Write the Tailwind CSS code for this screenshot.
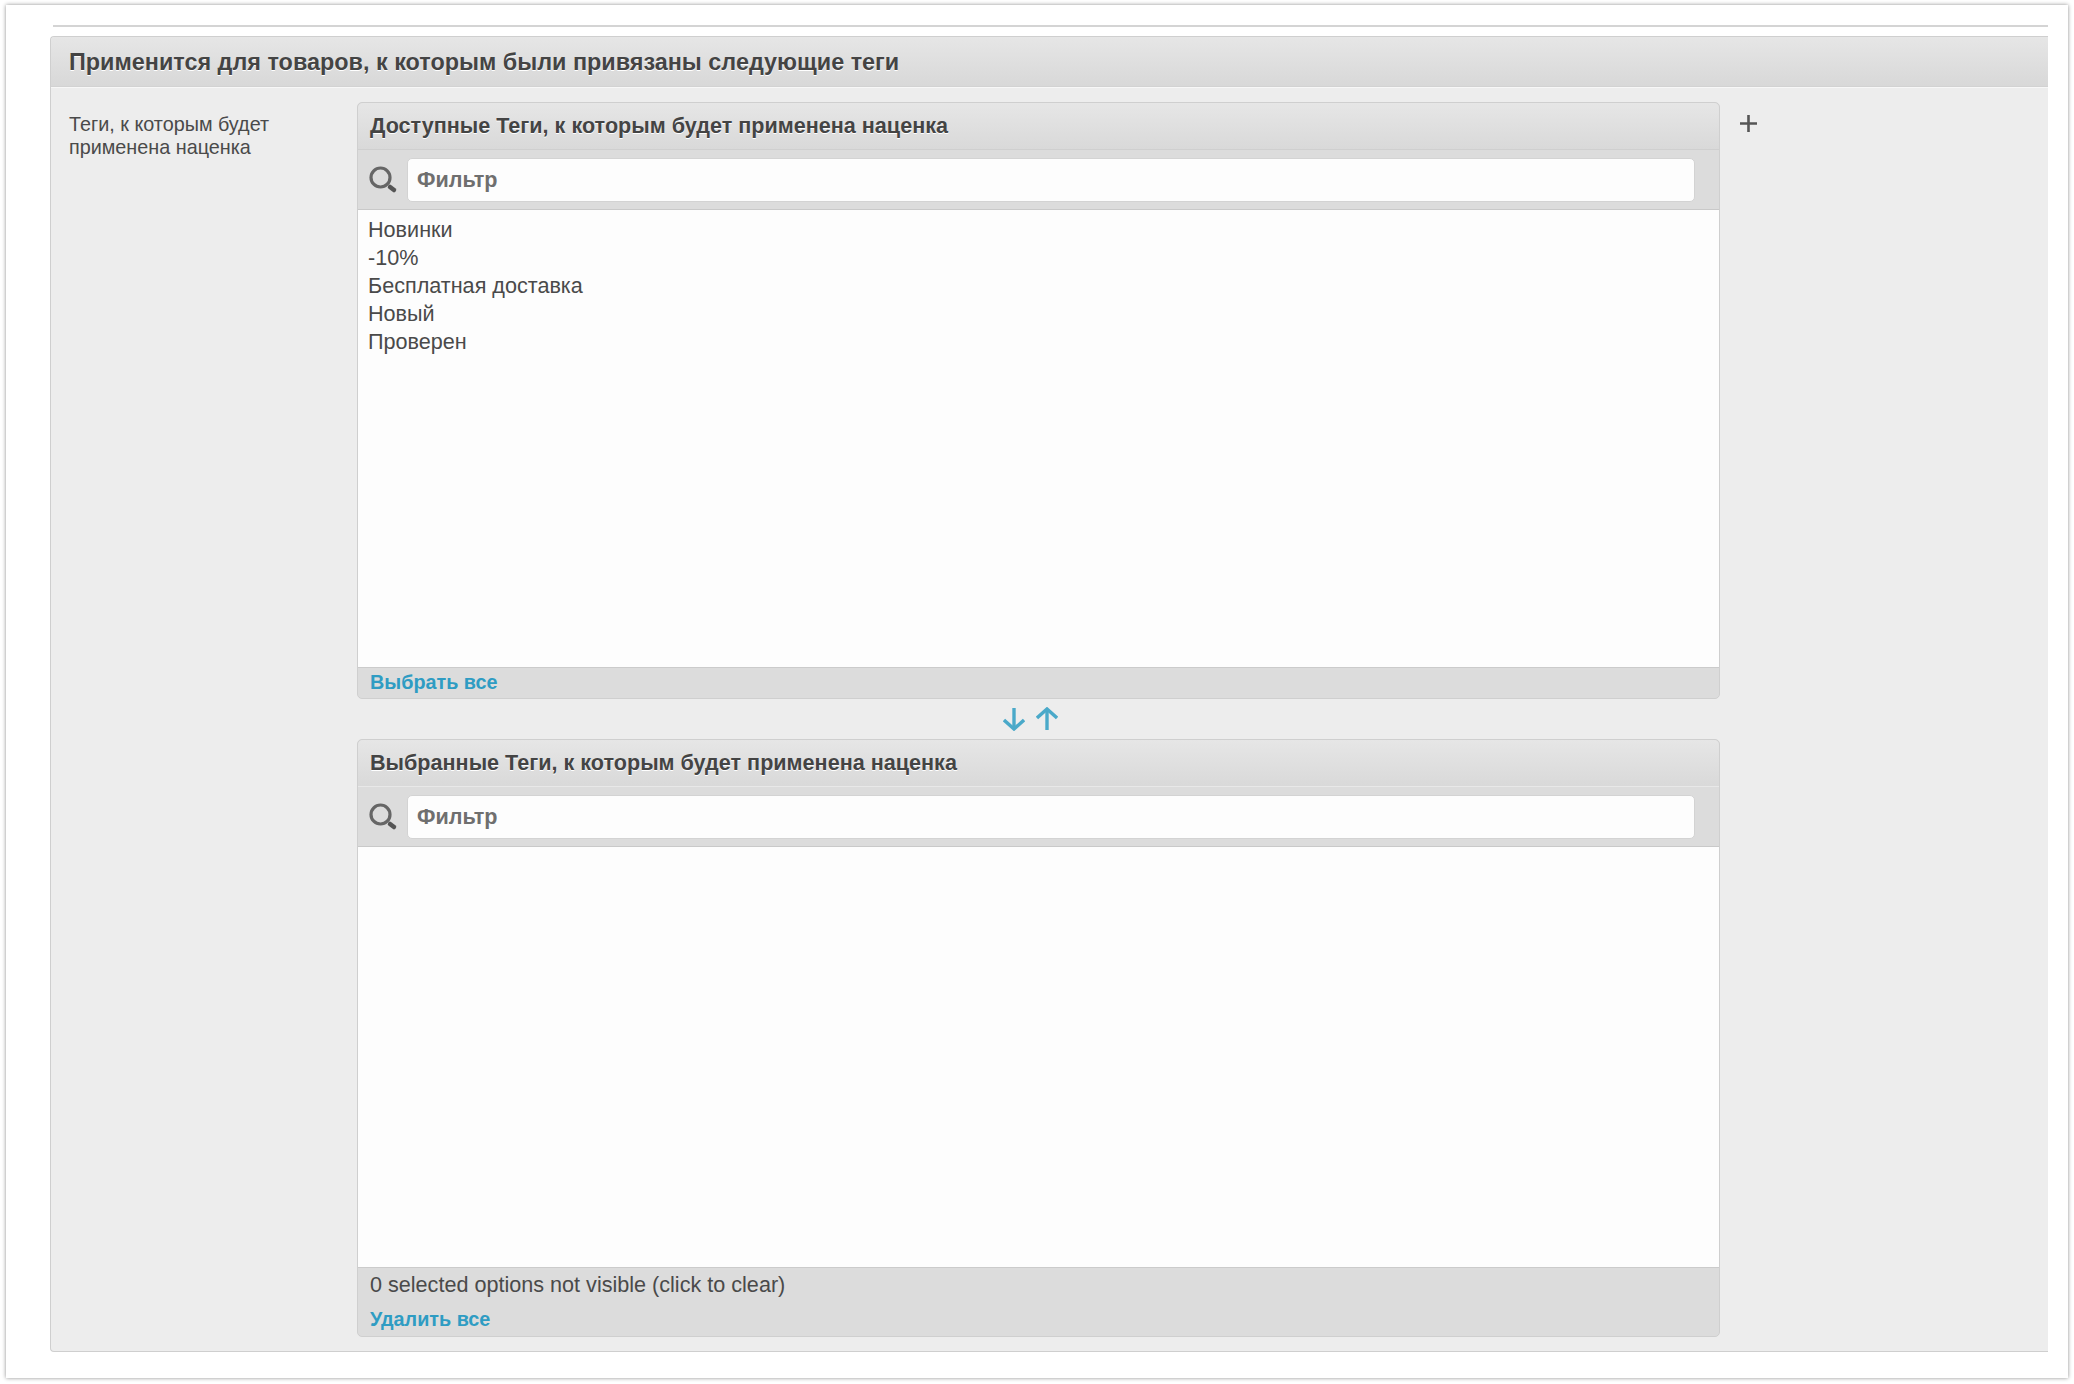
<!DOCTYPE html>
<html lang="ru">
<head>
<meta charset="utf-8">
<title>Теги</title>
<script src="https://cdn.jsdelivr.net/npm/@tailwindcss/browser@4"></script>
</head>
<body class="bg-white font-['Liberation_Sans',Arial,sans-serif] text-[#444]">
<div class="w-[2074px] h-[1384px] pl-[6px] pt-[5px] overflow-hidden">
  <div class="w-[2062px] h-[1373px] bg-white shadow-[0_0_4px_rgba(0,0,0,0.45)] pl-[44px] pt-[20px]">
    <div class="ml-[3px] w-[1995px] h-[2px] bg-[#d4d4d4]"></div>
    <section class="mt-[9px] w-[1998px] h-[1316px] bg-[#ededed] border-l border-t border-b border-[#cfcfcf] rounded-l-[4px] flex flex-col">
      <h2 class="h-[50px] shrink-0 flex items-center pl-[18px] pt-[2px] text-[23.4px] font-bold text-[#444] bg-gradient-to-b from-[#e6e6e6] to-[#d8d8d8] border-b border-[#d2d2d2] rounded-tl-[4px] [text-shadow:0_1px_0_#fff]">Применится для товаров, к которым были привязаны следующие теги</h2>
      <div class="flex flex-1 pl-[18px] pt-[14px] border-t border-[#f7f7f7]">
        <div class="w-[288px] shrink-0 pt-[11px] text-[19.8px] leading-[23px] text-[#4a4a4a]">Теги, к которым будет<br>применена наценка</div>
        <div class="w-[1363px] shrink-0">
          <div class="rounded-[5px] border border-[#cfcfcf] h-[597px] flex flex-col bg-[#dcdcdc]">
            <h3 class="h-[47px] shrink-0 flex items-center pl-[12px] pt-[1px] text-[21.6px] font-bold text-[#444] bg-gradient-to-b from-[#e6e6e6] to-[#d9d9d9] border-b border-[#cfcfcf] rounded-t-[5px] [text-shadow:0_1px_0_#fff]">Доступные Теги, к которым будет применена наценка</h3>
            <div class="h-[60px] shrink-0 flex items-center pl-[10px] bg-[#dcdcdc] border-b border-[#c9c9c9]">
              <svg class="w-[30px] h-[30px] shrink-0" viewBox="0 0 30 30" fill="none"><circle cx="12.5" cy="12.5" r="9.5" stroke="#666" stroke-width="3.2"/><path d="M22 22l4 3" stroke="#555" stroke-width="4.5" stroke-linecap="round"/></svg>
              <div class="ml-[9px] w-[1288px] h-[44px] flex items-center pl-[9px] pt-[1px] bg-[#fdfdfd] rounded-[5px] border border-[#d3d3d3] text-[21.6px] font-bold text-[#6f6f6f]">Фильтр</div>
            </div>
            <ul class="flex-1 -mr-[1px] bg-[#fdfdfd] border-r border-[#cfcfcf] pl-[10px] pt-[6px] text-[21.6px] leading-[28px] text-[#4a4a4a]">
              <li>Новинки</li>
              <li>-10%</li>
              <li>Бесплатная доставка</li>
              <li>Новый</li>
              <li>Проверен</li>
            </ul>
            <div class="h-[31px] shrink-0 flex items-center pl-[12px] bg-[#dcdcdc] border-t border-[#cbcbcb] rounded-b-[5px] text-[19.8px] font-bold text-[#2f9cc3]">Выбрать все</div>
          </div>
          <div class="h-[40px] flex items-center pl-[646px] gap-[11px]">
            <svg class="w-[22px] h-[24px]" viewBox="0 0 22 24" fill="none" stroke="#4aa9c9" stroke-width="3.4"><path d="M11 1v21"/><path d="M1 13l10 9 10-9"/></svg>
            <svg class="w-[22px] h-[24px]" viewBox="0 0 22 24" fill="none" stroke="#4aa9c9" stroke-width="3.4"><path d="M11 23V2"/><path d="M1 11l10-9 10 9"/></svg>
          </div>
          <div class="rounded-[5px] border border-[#cfcfcf] h-[598px] flex flex-col bg-[#dcdcdc]">
            <h3 class="h-[47px] shrink-0 flex items-center pl-[12px] pt-[1px] text-[21.6px] font-bold text-[#444] bg-gradient-to-b from-[#e6e6e6] to-[#d9d9d9] border-b border-[#e8e8e8] rounded-t-[5px] [text-shadow:0_1px_0_#fff]">Выбранные Теги, к которым будет применена наценка</h3>
            <div class="h-[60px] shrink-0 flex items-center pl-[10px] bg-[#dcdcdc] border-b border-[#c9c9c9]">
              <svg class="w-[30px] h-[30px] shrink-0" viewBox="0 0 30 30" fill="none"><circle cx="12.5" cy="12.5" r="9.5" stroke="#666" stroke-width="3.2"/><path d="M22 22l4 3" stroke="#555" stroke-width="4.5" stroke-linecap="round"/></svg>
              <div class="ml-[9px] w-[1288px] h-[44px] flex items-center pl-[9px] pt-[1px] bg-[#fdfdfd] rounded-[5px] border border-[#d3d3d3] text-[21.6px] font-bold text-[#6f6f6f]">Фильтр</div>
            </div>
            <div class="flex-1 -mr-[1px] bg-[#fdfdfd] border-r border-[#cfcfcf]"></div>
            <div class="h-[69px] shrink-0 pl-[12px] pt-[4px] bg-[#dcdcdc] border-t border-[#cbcbcb] rounded-b-[5px]">
              <div class="text-[21.6px] leading-[26px] text-[#4a4a4a]">0 selected options not visible (click to clear)</div>
              <div class="mt-[9px] text-[19.8px] leading-[24px] font-bold text-[#2f9cc3]">Удалить все</div>
            </div>
          </div>
        </div>
        <svg class="ml-[20px] mt-[13px] w-[17px] h-[17px] shrink-0" viewBox="0 0 17 17" fill="none" stroke="#555" stroke-width="2.6"><path d="M0 8.5h17M8.5 0v17"/></svg>
      </div>
    </section>
  </div>
</div>
</body>
</html>
